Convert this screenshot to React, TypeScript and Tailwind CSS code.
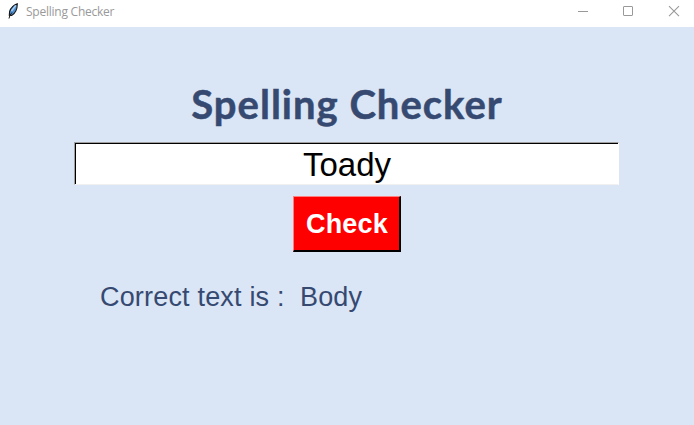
function Feather() {
  return (
    <svg width="12" height="16" viewBox="0 0 12 16" fill="none">
      <path d="M10.3 0.7C7.5 1.3 3.8 4.5 2.6 8.5L2.3 12.3L4.6 12.4C8 10.5 10.3 6 10.3 0.7Z" fill="#4f8fd0" stroke="#151515" strokeWidth="1.1" />
      <path d="M5 9.5L3 12L2 15.5" stroke="#151515" strokeWidth="1" />
      <path d="M8.8 2.5L4.5 8" stroke="#a9d0f5" strokeWidth="1.4" />
    </svg>
  );
}

function TitleBar() {
  return (
    <header className="flex h-[27px] items-start bg-white">
      <div className="ml-[7px] mt-[3px]"><Feather /></div>
      <span className="ml-[7px] mt-[4px] text-[12px] leading-4 tracking-[-0.24px] text-[#999999] font-['Open_Sans','Noto_Sans',sans-serif]">
        Spelling Checker
      </span>
      <svg className="ml-auto" width="120" height="26" viewBox="574 0 120 26" fill="none" stroke="#999999">
        <path d="M578 11.5H588" />
        <rect x="623.5" y="6.5" width="9" height="9" rx="0.5" />
        <path d="M669 6.2L679 16.2M679 6.2L669 16.2" strokeWidth="1.1" />
      </svg>
    </header>
  );
}

export default function App() {
  return (
    <div className="flex h-[425px] w-[694px] flex-col overflow-hidden bg-[#dae5f5] font-['Liberation_Sans',Arial,sans-serif]">
      <TitleBar />
      <main className="flex flex-col items-center">
        <h1 className="mt-[52px] h-[50px] whitespace-nowrap text-[40px] font-bold leading-[50px] tracking-[1px] text-[#364971] [-webkit-text-stroke:0.5px_#364971] font-['Trebuchet_MS',Lato,sans-serif]">
          Spelling Checker
        </h1>
        <div className="mr-px mt-[13px] h-[43px] w-[545px] border-b border-l border-r border-t border-b-[#f0f0f0] border-l-[#a0a0a0] border-r-white border-t-[#a0a0a0]">
          <div className="flex h-full items-center justify-center border-l border-t border-black bg-white text-[33px] leading-none text-black">
            Toady
          </div>
        </div>
        <button className="mt-[11px] flex h-[56px] w-[108px] items-center justify-center border border-b-2 border-r-2 border-b-black border-l-[#ff8080] border-r-black border-t-[#ff8080] bg-[#ff0000] pl-px pt-[2px] text-[27px] font-bold leading-none tracking-[0.2px] text-white">
          Check
        </button>
      </main>
      <p className="ml-[100px] mt-[29px] whitespace-pre text-[27px] leading-8 tracking-[0.18px] text-[#364971]">{"Correct text is :  Body"}</p>
    </div>
  );
}
